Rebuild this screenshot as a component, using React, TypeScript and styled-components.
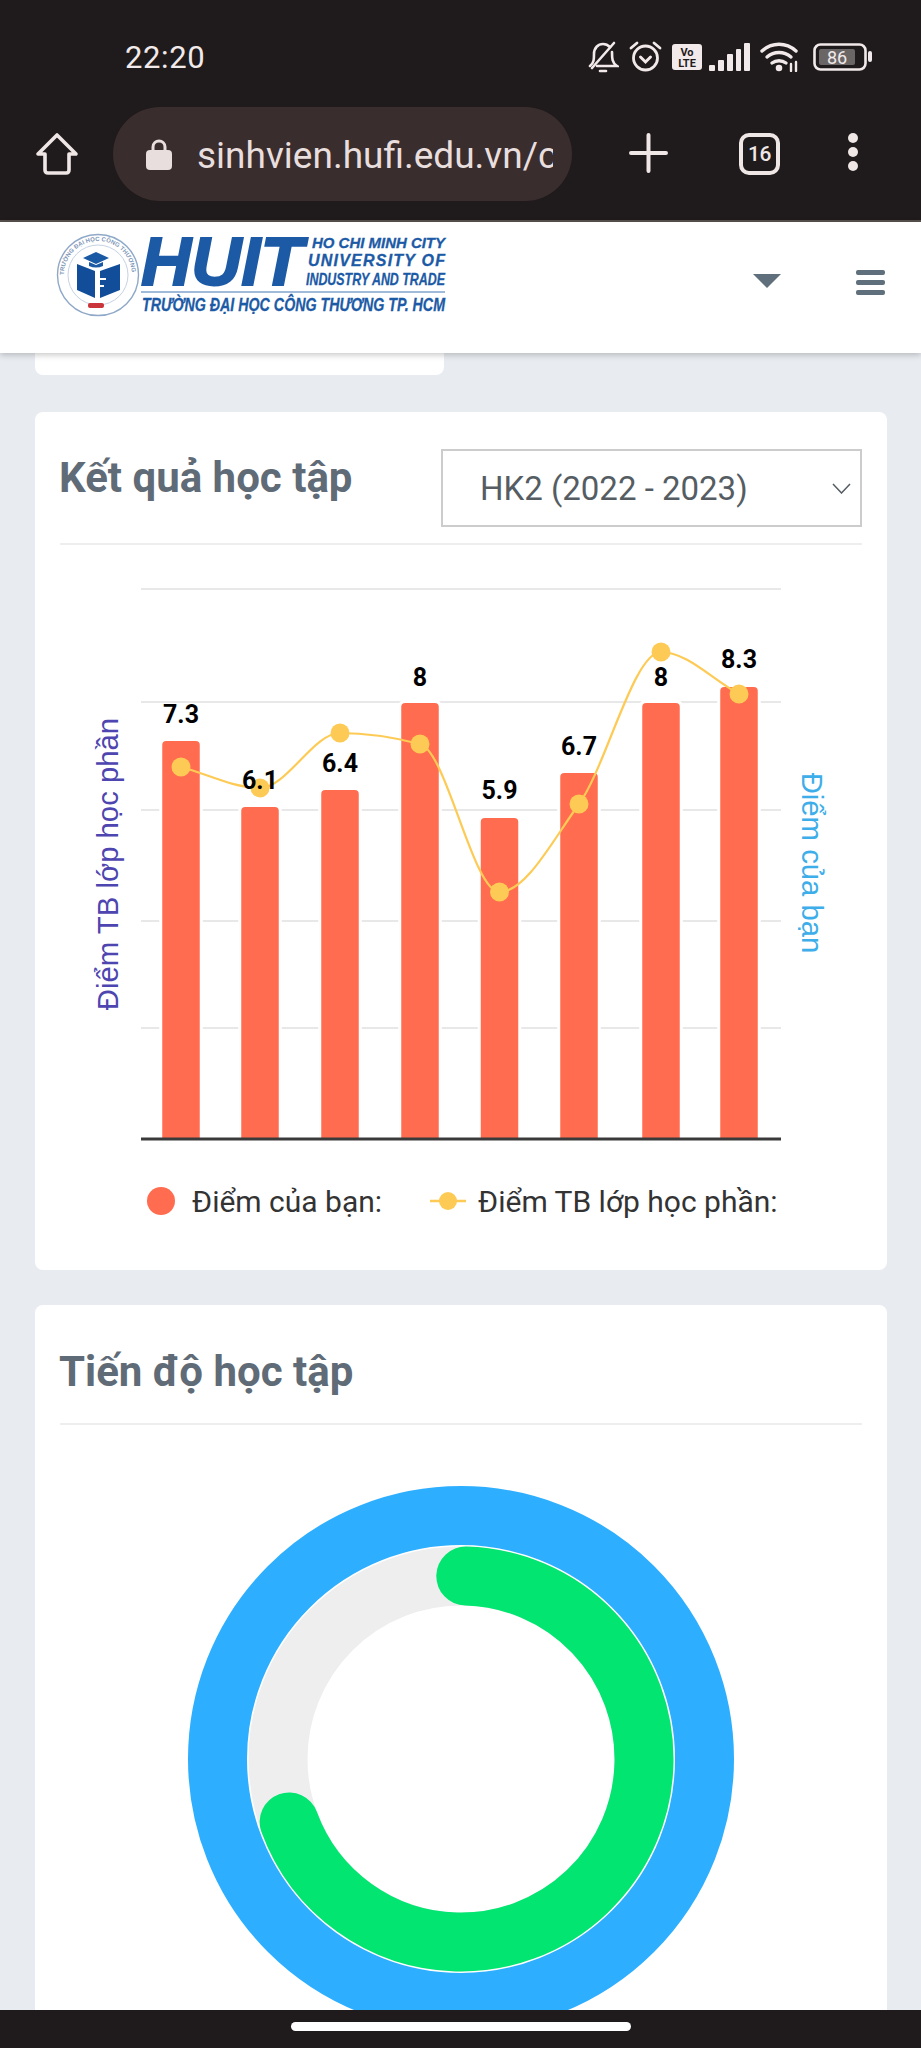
import React from 'react';
import styled, { createGlobalStyle } from 'styled-components';

const GlobalStyle = createGlobalStyle`
    html, body {
        margin: 0;
        padding: 0;
        background: #e8ecf0;
        font-family: Roboto, "Liberation Sans", sans-serif;
    }
`;

const Page = styled.div`
    position: relative;
    width: 921px;
    height: 2048px;
    overflow: hidden;
    background: #e8ecf0;
`;

/* browser chrome */
const Chrome = styled.div`
    background: #1f1a1b;
    border-bottom: 2px solid #57504f;
    color: #efe6e6;
`;

const StatusBar = styled.div`
    height: 107px;
    display: flex;
    align-items: flex-start;
    padding: 41px 48px 0 125px;
    box-sizing: border-box;
`;

const Clock = styled.div`
    font-size: 31px;
    line-height: 34px;
    width: 465px;
    letter-spacing: 0.6px;
    color: #f2eaea;
`;

const StatusIcons = styled.div`
    display: flex;
    align-items: center;
    gap: 10px;
`;

const SignalIcon = styled.svg`
    margin-left: -3px;
`;

const BatteryIcon = styled.svg`
    margin-left: 3px;
`;

const Toolbar = styled.div`
    height: 113px;
    display: flex;
    align-items: flex-start;
    padding-left: 35px;
`;

const HomeIcon = styled.svg`
    width: 44px;
    height: 44px;
    margin: 25px 34px 0 0;
`;

const UrlPill = styled.div`
    width: 459px;
    height: 94px;
    box-sizing: border-box;
    border-radius: 47px;
    background: #3a2d2d;
    display: flex;
    align-items: center;
    padding: 0 19px 0 33px;
    gap: 25px;
`;

const LockIcon = styled.svg`
    flex: none;
`;

const UrlText = styled.div`
    font-size: 37px;
    line-height: 46px;
    padding-top: 3px;
    white-space: nowrap;
    overflow: hidden;
    flex: 1;
    color: #e8dede;
`;

const ToolIcon = styled.svg<{ $left: number }>`
    margin-left: ${({ $left }) => $left}px;
    margin-top: 26px;
    flex: none;
`;

const TabCount = styled.div`
    margin: 26px 0 0 71px;
    width: 41px;
    height: 42px;
    box-sizing: border-box;
    border: 4px solid #efe6e6;
    border-radius: 10px;
    display: flex;
    align-items: center;
    justify-content: center;
    font-size: 21px;
    font-weight: 500;
    letter-spacing: -0.5px;
`;

/* site header */
const SiteHeader = styled.header`
    position: relative;
    z-index: 2;
    height: 131px;
    box-sizing: border-box;
    background: #fff;
    box-shadow: 0 2px 6px rgba(0, 0, 0, 0.22);
    display: flex;
    align-items: flex-start;
    padding: 11px 34px 0 55px;
`;

const Logo = styled.svg`
    width: 392px;
    height: 86px;
    flex: none;
    overflow: visible;
`;

const HeaderCaret = styled.div`
    margin: 41px 0 0 306px;
    width: 0;
    height: 0;
    border-left: 14px solid transparent;
    border-right: 14px solid transparent;
    border-top: 14px solid #5f6f7c;
`;

const Burger = styled.div`
    margin: 37px 0 0 75px;
    width: 29px;
    display: flex;
    flex-direction: column;
    gap: 5px;
`;

const BurgerBar = styled.span`
    display: block;
    height: 5px;
    border-radius: 2px;
    background: #5f6f7c;
`;

/* content */
const Content = styled.main`
    padding: 0 34px 0 35px;
`;

const PreviousCard = styled.div`
    width: 409px;
    height: 22px;
    background: #fff;
    border-radius: 0 0 8px 8px;
    margin-bottom: 37px;
`;

const Card = styled.section`
    background: #fff;
    border-radius: 8px;
    padding: 0 25px;
    margin-bottom: 35px;
`;

const CardHead = styled.div<{ $top: number; $height: number }>`
    display: flex;
    justify-content: space-between;
    align-items: flex-start;
    box-sizing: border-box;
    height: ${({ $height }) => $height}px;
    padding-top: ${({ $top }) => $top}px;
    border-bottom: 2px solid #eeeeee;
`;

const CardTitle = styled.h2<{ $drop?: number }>`
    margin: ${({ $drop }) => $drop ?? 0}px 0 0 -1px;
    font-size: 42px;
    line-height: 50px;
    font-weight: 700;
    color: #5f6b76;
`;

const SelectBox = styled.div`
    width: 421px;
    height: 78px;
    box-sizing: border-box;
    border: 2px solid #cccccc;
    display: flex;
    align-items: center;
    justify-content: space-between;
    padding: 0 9px 0 37px;
    font-size: 33px;
    color: #555d63;
`;

const ChartSvg = styled.svg`
    display: block;
    width: 802px;
    height: 625px;
`;

const BarValue = styled.text`
    font-family: Roboto, "Liberation Sans", sans-serif;
    font-size: 25px;
    font-weight: 700;
    fill: #000;
    text-anchor: middle;
`;

const AxisTitle = styled.text<{ $color: string }>`
    font-family: "Liberation Sans", Arial, sans-serif;
    font-size: 29.3px;
    fill: ${({ $color }) => $color};
    text-anchor: middle;
`;

const Legend = styled.div`
    height: 62px;
    display: flex;
    align-items: center;
    padding: 0 0 38px 87px;
    font-size: 30px;
    color: #333;
`;

const LegendDot = styled.span`
    width: 28px;
    height: 28px;
    border-radius: 50%;
    background: #ff6c4f;
    margin-right: 17px;
`;

const LegendLabel = styled.span`
    white-space: nowrap;
`;

const LegendLine = styled.svg`
    width: 36px;
    height: 20px;
    margin: 0 12px 0 48px;
    flex: none;
`;

const DonutSvg = styled.svg`
    display: block;
    margin: 61px auto 0;
    width: 546px;
    height: 546px;
`;

/* phone navigation bar, on top of the page */
const NavBar = styled.div`
    position: absolute;
    left: 0;
    right: 0;
    bottom: 0;
    z-index: 3;
    height: 38px;
    background: #1f1a1b;
    display: flex;
    justify-content: center;
    padding-top: 12px;
    box-sizing: border-box;
`;

const HomePill = styled.div`
    width: 340px;
    height: 9px;
    border-radius: 5px;
    background: #fff;
`;

const BARS = [
    { x: 181, top: 741, label: '7.3', labelY: 723, avg: 767 },
    { x: 260, top: 807, label: '6.1', labelY: 789, avg: 788 },
    { x: 340, top: 790, label: '6.4', labelY: 772, avg: 733 },
    { x: 420, top: 703, label: '8', labelY: 686, avg: 744 },
    { x: 499.5, top: 818, label: '5.9', labelY: 799, avg: 892 },
    { x: 579, top: 773, label: '6.7', labelY: 755, avg: 804 },
    { x: 661, top: 703, label: '8', labelY: 686, avg: 652 },
    { x: 739, top: 687, label: '8.3', labelY: 668, avg: 694 },
];

const GRID = [589, 702, 810, 921, 1028];
const AXIS_Y = 1139;
const BAR_W = 37.5;

// monotone cubic through the points, same as chart.js cubicInterpolationMode
const monotonePath = (pts: { x: number; y: number }[]) => {
    const slopes = pts.slice(1).map((p, i) => (p.y - pts[i].y) / (p.x - pts[i].x));
    const tangents = pts.map((_, i) => {
        if (i === 0) return slopes[0];
        if (i === pts.length - 1) return slopes[i - 1];
        if (slopes[i - 1] * slopes[i] <= 0) return 0;
        return (2 * slopes[i - 1] * slopes[i]) / (slopes[i - 1] + slopes[i]);
    });
    let d = `M${pts[0].x} ${pts[0].y}`;
    for (let i = 0; i < pts.length - 1; i++) {
        const h = (pts[i + 1].x - pts[i].x) / 3;
        d += ` C${pts[i].x + h} ${pts[i].y + tangents[i] * h} ${pts[i + 1].x - h} ${pts[i + 1].y - tangents[i + 1] * h} ${pts[i + 1].x} ${pts[i + 1].y}`;
    }
    return d;
};

const ResultChart = () => {
    const line = monotonePath(BARS.map((b) => ({ x: b.x, y: b.avg })));
    return (
        <ChartSvg viewBox="60 545 802 625">
            {GRID.map((y) => (
                <line key={y} x1={141} x2={781} y1={y} y2={y} stroke="#e8e8e8" strokeWidth={2} />
            ))}
            {BARS.map((b) => (
                <path
                    key={b.x}
                    d={`M${b.x - BAR_W / 2} ${AXIS_Y} V${b.top + 4} q0 -4 4 -4 H${b.x + BAR_W / 2 - 4} q4 0 4 4 V${AXIS_Y} Z`}
                    fill="#ff6c4f"
                    stroke="#fff"
                    strokeWidth={6}
                    paintOrder="stroke"
                />
            ))}
            <line x1={141} x2={781} y1={AXIS_Y} y2={AXIS_Y} stroke="#3a3a3a" strokeWidth={3} />
            <path d={line} fill="none" stroke="#fdcb55" strokeWidth={2.2} />
            {BARS.map((b) => (
                <circle key={b.x} cx={b.x} cy={b.avg} r={9.5} fill="#fdcb55" />
            ))}
            {BARS.map((b) => (
                <BarValue key={b.x} x={b.x} y={b.labelY}>
                    {b.label}
                </BarValue>
            ))}
            <AxisTitle $color="#4d45b0" transform="translate(118 864) rotate(-90)">
                Điểm TB lớp học phần
            </AxisTitle>
            <AxisTitle $color="#3daee9" transform="translate(802 863) rotate(90)">
                Điểm của bạn
            </AxisTitle>
        </ChartSvg>
    );
};

const ProgressDonut = () => (
    <DonutSvg viewBox="0 0 546 546">
        <circle cx={273} cy={273} r={243.5} fill="none" stroke="#2eaeff" strokeWidth={59} />
        <circle cx={273} cy={273} r={183} fill="none" stroke="#eeeeee" strokeWidth={59} />
        <circle
            cx={273}
            cy={273}
            r={183}
            fill="none"
            stroke="#02e570"
            strokeWidth={59}
            strokeLinecap="round"
            pathLength={100}
            strokeDasharray="69 100"
            transform="rotate(-88.5 273 273)"
        />
    </DonutSvg>
);

const HuitLogo = () => (
    <Logo viewBox="55 235 392 86">
        <defs>
            <path id="seal-top" d="M64 277 A34 34 0 1 1 132 277" />
        </defs>
        <circle cx={98} cy={277} r={40.5} fill="#fff" stroke="#8fa8c8" strokeWidth={1.4} />
        <circle cx={98} cy={277} r={30} fill="none" stroke="#c5d2e3" strokeWidth={1} />
        <text fontFamily="Liberation Sans" fontSize={6} fontWeight={700} fill="#7f97b8">
            <textPath href="#seal-top" textLength={104}>
                TRƯỜNG ĐẠI HỌC CÔNG THƯƠNG
            </textPath>
        </text>
        {/* graduation cap */}
        <path d="M96 254 L109 260 L96 266 L83 260 Z" fill="#1a5aa5" />
        <path d="M89 264 L96 267 L103 264 V268 Q96 271 89 268 Z" fill="#1a5aa5" />
        {/* open book */}
        <path
            d="M77 266 L95 273 V300 L77 292 Z M120 266 L100 273 V300 L120 292 Z"
            fill="#114d98"
        />
        <path d="M99 274 V299 M99 281 H106 M99 288 H104" stroke="#fff" strokeWidth={1.8} fill="none" />
        <rect x={88} y={305} width={16} height={5} rx={2} fill="#c9353a" />
        <g
            fontFamily="Liberation Sans"
            fontWeight={700}
            fontStyle="italic"
            fill="#1c5aa6"
            stroke="#1c5aa6"
        >
            <text x={141} y={287} fontSize={69} strokeWidth={2} textLength={162} lengthAdjust="spacingAndGlyphs">
                HUIT
            </text>
            <text x={312} y={250} fontSize={14} strokeWidth={0.3} textLength={133} lengthAdjust="spacingAndGlyphs">
                HO CHI MINH CITY
            </text>
            <text x={308} y={268} fontSize={16} strokeWidth={0.3} textLength={137} lengthAdjust="spacing">
                UNIVERSITY OF
            </text>
            <text x={306} y={287} fontSize={17} strokeWidth={0.3} textLength={139} lengthAdjust="spacingAndGlyphs">
                INDUSTRY AND TRADE
            </text>
            <text x={142} y={313} fontSize={18} strokeWidth={0.3} textLength={303} lengthAdjust="spacingAndGlyphs">
                TRƯỜNG ĐẠI HỌC CÔNG THƯƠNG TP. HCM
            </text>
        </g>
        <line x1={141} x2={445} y1={294} y2={294} stroke="#7fa3cf" strokeWidth={1.6} />
    </Logo>
);

const StatusIconRow = () => (
    <StatusIcons>
        {/* muted bell */}
        <svg width={32} height={32} viewBox="0 0 32 32" fill="none" stroke="#f2eaea" strokeWidth={2.6} strokeLinecap="round">
            <path d="M3 25 C7 22 7 18 7 13 C7 7 11 3 16 3 C19 3 21 4 23 6 M25 11 C25 17 25 22 30 25 H10" />
            <path d="M13 30 H19" />
            <path d="M27 2 L5 27" />
        </svg>
        {/* alarm */}
        <svg width={33} height={32} viewBox="0 0 33 32" fill="none" stroke="#f2eaea" strokeWidth={2.8} strokeLinecap="round">
            <circle cx={16.5} cy={17} r={12} />
            <path d="M2 7 L8 2 M31 7 L25 2" />
            <path d="M11.5 16 L16.5 21 L21.5 16" strokeWidth={3} />
        </svg>
        {/* VoLTE */}
        <svg width={30} height={26} viewBox="0 0 30 26">
            <rect width={30} height={26} rx={3} fill="#f2eaea" />
            <text x={15} y={11.5} textAnchor="middle" fontFamily="Roboto" fontSize={11} fontWeight={700} fill="#1f1a1b">
                Vo
            </text>
            <text x={15} y={23} textAnchor="middle" fontFamily="Roboto" fontSize={11} fontWeight={700} fill="#1f1a1b">
                LTE
            </text>
        </svg>
        {/* signal */}
        <SignalIcon width={41} height={28} viewBox="0 0 41 28" fill="#f2eaea">
            <rect x={0} y={22} width={6} height={6} rx={1} />
            <rect x={9} y={17} width={6} height={11} rx={1} />
            <rect x={18} y={11} width={6} height={17} rx={1} />
            <rect x={27} y={6} width={5} height={22} rx={1} />
            <rect x={35} y={0} width={6} height={28} rx={1} />
        </SignalIcon>
        {/* wifi */}
        <svg width={40} height={30} viewBox="0 0 40 30" fill="none" stroke="#f2eaea" strokeWidth={3.4} strokeLinecap="round">
            <path d="M2 9 C12 0 26 0 36 9" />
            <path d="M7 15 C14 9 24 9 31 15" />
            <path d="M12 21 C16 18 22 18 26 21" />
            <circle cx={19} cy={26} r={1.6} fill="#f2eaea" />
            <path d="M31 22 V29 M36 20 V29" strokeWidth={2.4} />
        </svg>
        {/* battery */}
        <BatteryIcon width={60} height={28} viewBox="0 0 60 28">
            <rect x={1.5} y={1.5} width={51} height={25} rx={6} fill="none" stroke="#f2eaea" strokeWidth={2.6} />
            <rect x={6} y={6} width={36} height={16} rx={2} fill="#6b6666" />
            <text x={24} y={21} textAnchor="middle" fontFamily="Roboto" fontSize={18} fill="#f2eaea">
                86
            </text>
            <rect x={55} y={8} width={4} height={11} rx={2} fill="#f2eaea" />
        </BatteryIcon>
    </StatusIcons>
);

const App = () => (
    <Page>
        <GlobalStyle />
        <Chrome>
            <StatusBar>
                <Clock>22:20</Clock>
                <StatusIconRow />
            </StatusBar>
            <Toolbar>
                <HomeIcon viewBox="0 0 44 44" fill="none" stroke="#efe6e6" strokeWidth={3.6} strokeLinejoin="round">
                    <path d="M22 3 L41 22 H34 V38 Q34 41 31 41 H13 Q10 41 10 38 V22 H3 Z" />
                </HomeIcon>
                <UrlPill>
                    <LockIcon width={26} height={32} viewBox="0 0 26 32">
                        <path d="M7 14 V9 C7 1 19 1 19 9 V14" fill="none" stroke="#e8dede" strokeWidth={3} />
                        <rect x={0} y={12} width={26} height={20} rx={4} fill="#e8dede" />
                    </LockIcon>
                    <UrlText>sinhvien.hufi.edu.vn/c</UrlText>
                </UrlPill>
                <ToolIcon $left={57} width={39} height={40} viewBox="0 0 39 40" stroke="#efe6e6" strokeWidth={4} strokeLinecap="round">
                    <path d="M19.5 2 V38 M2 20 H37" />
                </ToolIcon>
                <TabCount>16</TabCount>
                <ToolIcon $left={68} width={10} height={38} viewBox="0 0 10 38" fill="#efe6e6">
                    <circle cx={5} cy={5} r={5} />
                    <circle cx={5} cy={19} r={5} />
                    <circle cx={5} cy={33} r={5} />
                </ToolIcon>
            </Toolbar>
        </Chrome>
        <SiteHeader>
            <HuitLogo />
            <HeaderCaret />
            <Burger>
                <BurgerBar />
                <BurgerBar />
                <BurgerBar />
            </Burger>
        </SiteHeader>
        <Content>
            <PreviousCard />
            <Card>
                <CardHead $top={37} $height={133}>
                    <CardTitle $drop={4}>Kết quả học tập</CardTitle>
                    <SelectBox>
                        HK2 (2022 - 2023)
                        <svg width={19} height={11} viewBox="0 0 19 11" fill="none" stroke="#555d63" strokeWidth={1.5}>
                            <path d="M1 1 L9.5 10 L18 1" />
                        </svg>
                    </SelectBox>
                </CardHead>
                <ResultChart />
                <Legend>
                    <LegendDot />
                    <LegendLabel>Điểm của bạn:</LegendLabel>
                    <LegendLine viewBox="0 0 36 20">
                        <line x1={0} x2={36} y1={10} y2={10} stroke="#fdcb55" strokeWidth={2.5} />
                        <circle cx={18} cy={10} r={9} fill="#fdcb55" />
                    </LegendLine>
                    <LegendLabel>Điểm TB lớp học phần:</LegendLabel>
                </Legend>
            </Card>
            <Card>
                <CardHead $top={42} $height={120}>
                    <CardTitle>Tiến độ học tập</CardTitle>
                </CardHead>
                <ProgressDonut />
            </Card>
        </Content>
        <NavBar>
            <HomePill />
        </NavBar>
    </Page>
);

export default App;
